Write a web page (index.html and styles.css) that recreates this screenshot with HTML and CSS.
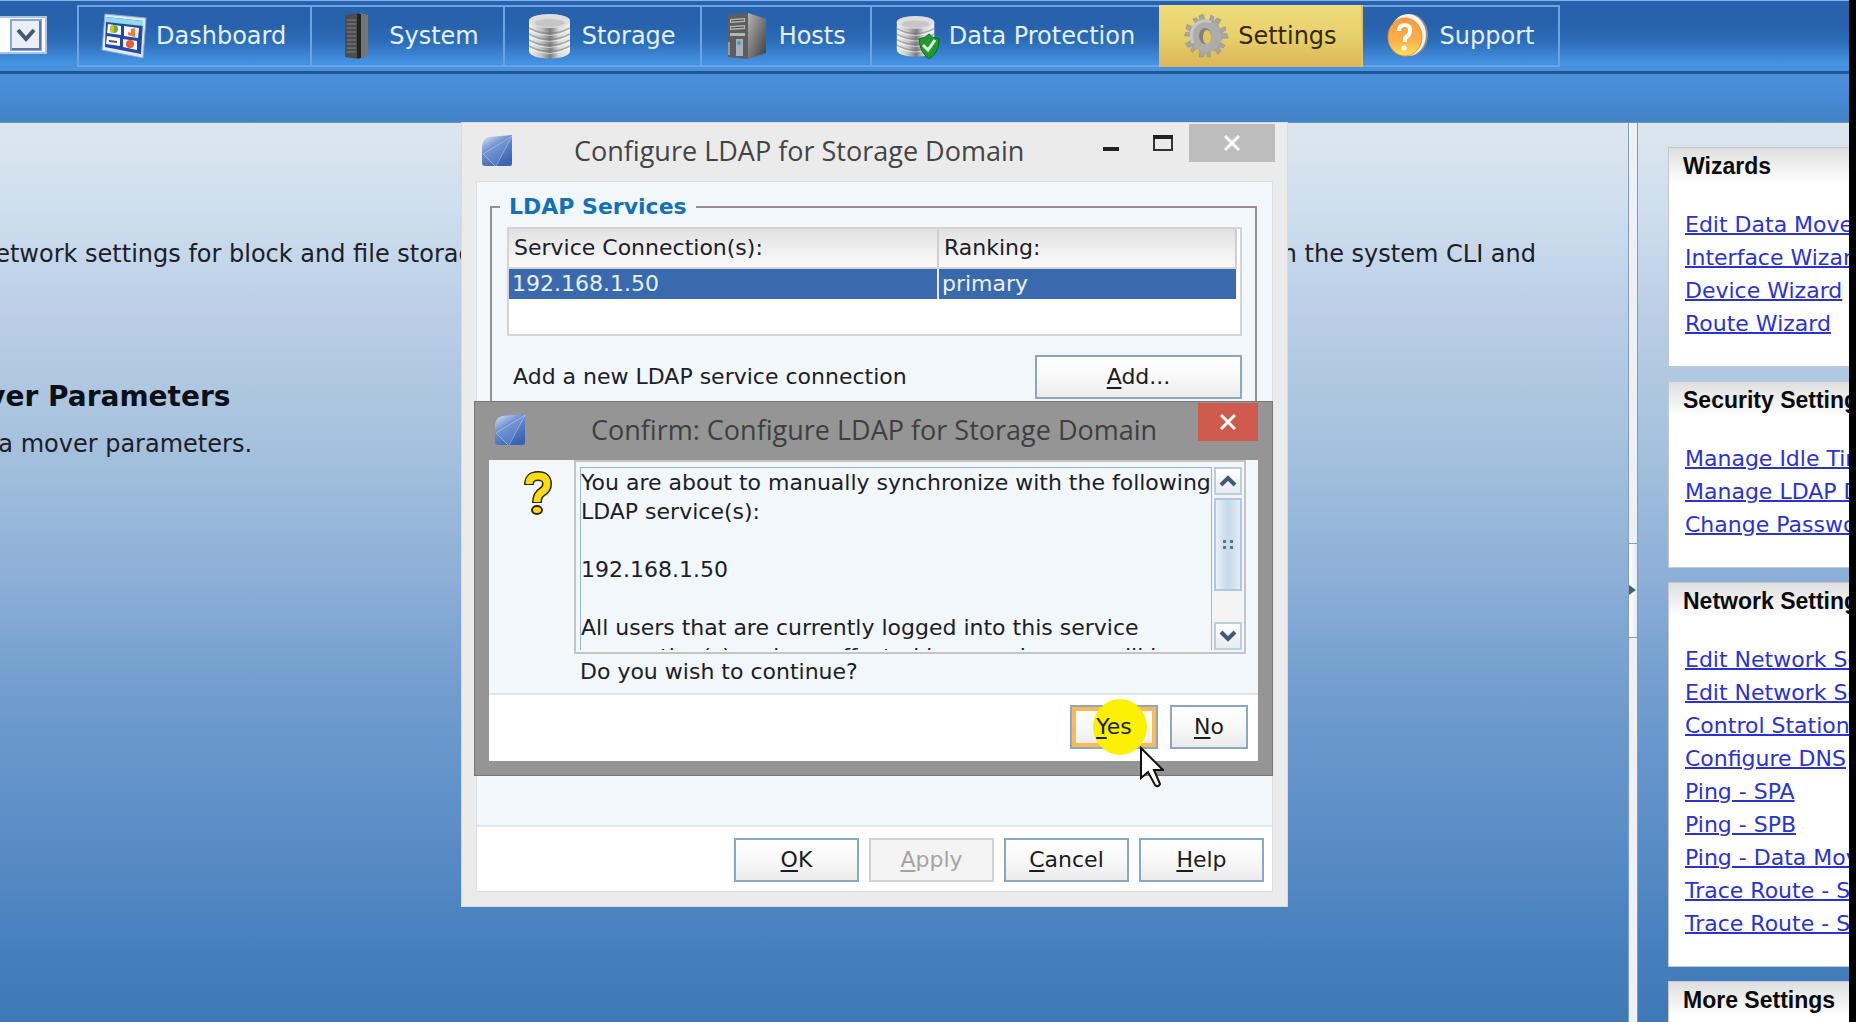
FILE: index.html
```html
<!DOCTYPE html>
<html lang="en">
<head>
    <meta charset="UTF-8">
    <meta name="viewport" content="width=device-width, initial-scale=1.0">
    <title>Settings</title>
    <link rel="stylesheet" href="styles.css">
</head>
<body>
    <!-- shared gradients and symbols -->
    <svg class="defs" width="0" height="0" aria-hidden="true">
        <defs>
            <linearGradient id="disk" x1="0" x2="1" y1="0" y2="0">
                <stop offset="0" stop-color="#f4f4f4"/>
                <stop offset="0.3" stop-color="#c4c4c4"/>
                <stop offset="0.52" stop-color="#7c7c7c"/>
                <stop offset="0.72" stop-color="#d8d8d8"/>
                <stop offset="1" stop-color="#f0f0f0"/>
            </linearGradient>
            <linearGradient id="steel" x1="0" x2="1" y1="0" y2="1">
                <stop offset="0" stop-color="#b4b4b4"/>
                <stop offset="1" stop-color="#3c3c3c"/>
            </linearGradient>
            <linearGradient id="orange" x1="0" x2="0" y1="0" y2="1">
                <stop offset="0" stop-color="#f79a3c"/>
                <stop offset="0.6" stop-color="#fbb04c"/>
                <stop offset="1" stop-color="#ffe25a"/>
            </linearGradient>
            <linearGradient id="blue" x1="0" x2="0.6" y1="0" y2="1">
                <stop offset="0" stop-color="#e4edf8"/>
                <stop offset="0.45" stop-color="#6b8fce"/>
                <stop offset="1" stop-color="#3a63b4"/>
            </linearGradient>
            <symbol id="drum" viewBox="0 0 46 46">
                <path d="M2 8C2 -1 43 -1 43 8V38C43 48 2 48 2 38Z" fill="url(#disk)"/>
                <ellipse cx="22.500" cy="8" rx="20.500" ry="7" fill="#dedede"/>
                <ellipse cx="22.500" cy="10" rx="15" ry="4" fill="#c6c6c6"/>
                <path d="M2 15Q22 26 43 15M2 21Q22 32 43 21M2 27Q22 38 43 27M2 33Q22 44 43 33" fill="none" stroke="#777" stroke-opacity="0.55" stroke-width="1.500"/>
                <path d="M2 17Q22 28 43 17M2 23Q22 34 43 23M2 29Q22 40 43 29M2 35Q22 46 43 35" fill="none" stroke="#fff" stroke-opacity="0.6"/>
            </symbol>
            <symbol id="app" viewBox="0 0 32 32">
                <path d="M8 2L31 0V29Q31 31 29 31H4Q1 31 1 28V10Q2 4 8 2Z" fill="url(#blue)"/>
                <path d="M1 18L31 1L14 31Z" fill="#8eabdb" fill-opacity="0.25"/>
                <path d="M2 19L14 31M31 1L15 31M31 1L2 19" fill="none" stroke="#b9cdec" stroke-opacity="0.6"/>
            </symbol>
            <symbol id="cross" viewBox="0 0 16 16">
                <path d="M1 1L15 15M15 1L1 15" stroke="#fff" stroke-width="3"/>
            </symbol>
        </defs>
    </svg>

    <header class="topbar">
        <div class="picker">
            <select class="picker-select" aria-label="System"><option></option></select>
            <svg class="picker-arrow" width="32" height="32" viewBox="0 0 32 32" aria-hidden="true">
                <rect x="1" y="1" width="30" height="30" fill="#e9eef7" stroke="#84a8d6" stroke-width="2"/>
                <path d="M30 2V30H2" fill="none" stroke="#5579ab" stroke-width="2"/>
                <path d="M8 11L16 20L24 11" fill="none" stroke="#41587a" stroke-width="4"/>
            </svg>
        </div>
        <nav class="nav">
            <a class="nav-item" href="#dashboard">
                <svg width="46" height="46" viewBox="0 0 46 46" aria-hidden="true">
                    <path d="M4 1L45 5L42 45L1 37Z" fill="#dce9f4" stroke="#91a9c4"/>
                    <path d="M5 4L42 8L40 41L4 34Z" fill="#2448a8"/>
                    <path d="M5 4L42 8V13L5 9Z" fill="#8fdcea"/>
                    <path d="M7 11L20 13V22L6 20ZM23 13L38 15L37 25L23 23ZM6 23L19 25V33L5 31ZM22 26L36 28V37L22 34Z" fill="#f6f8fa"/>
                    <circle cx="13" cy="16" r="4" fill="#6cae3e"/>
                    <path d="M13 12A4 4 0 0 0 13 20Z" fill="#e2b52e"/>
                    <path d="M27 22V19L30 20V16L34 15V24Z" fill="#ef7a32"/>
                    <path d="M8 27L16 28V30L8 29Z" fill="#555"/>
                    <circle cx="29" cy="31" r="4" fill="#ea5a36"/>
                </svg>
                Dashboard
            </a>
            <a class="nav-item" href="#system">
                <svg width="46" height="46" viewBox="0 0 46 46" aria-hidden="true">
                    <path d="M11 2L26 0V46L11 44Z" fill="#4c4c4c"/>
                    <path d="M26 0L34 2V43L26 46Z" fill="#747474"/>
                    <path d="M23 1H27V45H23Z" fill="#222"/>
                    <path d="M13 7H22M13 11H22M13 15H22M13 19H22M13 23H22M13 27H22M13 31H22M13 35H22M13 39H22" stroke="#858585"/>
                </svg>
                System
            </a>
            <a class="nav-item" href="#storage">
                <svg width="46" height="46" aria-hidden="true"><use href="#drum"/></svg>
                Storage
            </a>
            <a class="nav-item" href="#hosts">
                <svg width="46" height="46" viewBox="0 0 46 46" aria-hidden="true">
                    <path d="M4 2L24 0V46L4 44Z" fill="#5e5e5e"/>
                    <path d="M24 0L42 6V40L24 46Z" fill="url(#steel)"/>
                    <path d="M6 6L21 5V9L6 10ZM6 13L21 12V16L6 17ZM6 20L21 20V23L6 23Z" fill="#b5b5b5"/>
                    <path d="M7 8L20 7M7 15L20 14" stroke="#444"/>
                    <rect x="12" y="26" width="7" height="17" fill="#a9b1b7"/>
                    <circle cx="15" cy="30" r="2" fill="#28a0e0"/>
                    <path d="M5 29V42" stroke="#9a9a9a" stroke-width="2"/>
                </svg>
                Hosts
            </a>
            <a class="nav-item" href="#protection">
                <svg width="46" height="46" viewBox="0 0 46 46" aria-hidden="true">
                    <use href="#drum" x="1" y="2" width="42" height="42"/>
                    <path d="M25 26Q32 25 35 21Q38 25 45 26Q45 40 35 46Q26 40 25 26Z" fill="#1f9a2c" stroke="#0d6d1c"/>
                    <path d="M29 32L34 37L41 27" fill="none" stroke="#e9f7e4" stroke-width="3"/>
                </svg>
                Data Protection
            </a>
            <a class="nav-item nav-item-active" href="#settings">
                <svg width="46" height="46" viewBox="0 0 46 46" aria-hidden="true">
                    <g fill="#a6a6a2" stroke="#8e8e88" stroke-width="0.500">
                        <path id="tooth" d="M17 13L16 3L20 1L22 7L26 8L28 2L31 4L29 13Z"/>
                        <use href="#tooth" transform="rotate(51 23 23)"/>
                        <use href="#tooth" transform="rotate(103 23 23)"/>
                        <use href="#tooth" transform="rotate(154 23 23)"/>
                        <use href="#tooth" transform="rotate(206 23 23)"/>
                        <use href="#tooth" transform="rotate(257 23 23)"/>
                        <use href="#tooth" transform="rotate(309 23 23)"/>
                    </g>
                    <ellipse cx="23" cy="23" rx="10" ry="11" fill="none" stroke="#acacaa" stroke-width="10"/>
                    <path d="M10 30A14 15 0 0 1 28 9" fill="none" stroke="#c6c6c4" stroke-width="3"/>
                    <ellipse cx="22" cy="23" rx="6" ry="8" fill="#80807c"/>
                    <ellipse cx="24" cy="24" rx="4" ry="7" fill="#e2c763"/>
                </svg>
                Settings
            </a>
            <a class="nav-item" href="#support">
                <svg width="46" height="46" viewBox="0 0 46 46" aria-hidden="true">
                    <ellipse cx="25" cy="22" rx="18" ry="21" fill="#8f8f93"/>
                    <ellipse cx="23" cy="22" rx="18" ry="21" fill="#f5f3f0"/>
                    <ellipse cx="20" cy="24" rx="17" ry="19" fill="url(#orange)" stroke="#e8912c"/>
                    <path d="M14 18Q14 12 20 12Q26 12 25 19Q24 23 20 25V29" fill="none" stroke="#fff" stroke-width="4"/>
                    <circle cx="19" cy="35" r="2.500" fill="#fff"/>
                </svg>
                Support
            </a>
        </nav>
    </header>
    <div class="subbar"></div>

    <div class="workspace">
        <main class="content">
            <p class="intro"><span>Configure network settings for block and file storage</span><span>from the system CLI and</span></p>
            <h2 class="content-title">Data Mover Parameters</h2>
            <p class="content-text">Manage data mover parameters.</p>
        </main>
        <div class="splitter">
            <button class="splitter-handle" type="button" aria-label="Collapse panel">
                <svg width="7" height="10" viewBox="0 0 7 10" aria-hidden="true"><path d="M0 0L7 5L0 10Z" fill="#46607f"/></svg>
            </button>
        </div>
        <aside class="sidebar">
            <section class="panel">
                <h3 class="panel-title">Wizards</h3>
                <ul class="panel-links">
                    <li><a href="#">Edit Data Mover</a></li>
                    <li><a href="#">Interface Wizard</a></li>
                    <li><a href="#">Device Wizard</a></li>
                    <li><a href="#">Route Wizard</a></li>
                </ul>
            </section>
            <section class="panel">
                <h3 class="panel-title">Security Settings</h3>
                <ul class="panel-links">
                    <li><a href="#">Manage Idle Timeout</a></li>
                    <li><a href="#">Manage LDAP Domain</a></li>
                    <li><a href="#">Change Password</a></li>
                </ul>
            </section>
            <section class="panel">
                <h3 class="panel-title">Network Settings</h3>
                <ul class="panel-links">
                    <li><a href="#">Edit Network Settings</a></li>
                    <li><a href="#">Edit Network Settings</a></li>
                    <li><a href="#">Control Station</a></li>
                    <li><a href="#">Configure DNS</a></li>
                    <li><a href="#">Ping - SPA</a></li>
                    <li><a href="#">Ping - SPB</a></li>
                    <li><a href="#">Ping - Data Mover</a></li>
                    <li><a href="#">Trace Route - SPA</a></li>
                    <li><a href="#">Trace Route - SPB</a></li>
                </ul>
            </section>
            <section class="panel">
                <h3 class="panel-title">More Settings</h3>
                <ul class="panel-links"></ul>
            </section>
        </aside>
    </div>

    <!-- LDAP configuration window -->
    <div class="window ldap-window" role="dialog" aria-labelledby="ldapTitle">
        <div class="titlebar">
            <svg class="app-icon" width="32" height="32" aria-hidden="true"><use href="#app"/></svg>
            <h1 class="window-title" id="ldapTitle">Configure LDAP for Storage Domain</h1>
            <button class="win-button" type="button" aria-label="Minimize">
                <svg width="16" height="16" viewBox="0 0 16 16" aria-hidden="true"><path d="M0 12H16V16H0Z" fill="#222"/></svg>
            </button>
            <button class="win-button" type="button" aria-label="Maximize">
                <svg width="20" height="16" viewBox="0 0 20 16" aria-hidden="true"><path d="M1 2H19V15H1Z" fill="none" stroke="#333" stroke-width="2"/><path d="M0 0H20V4H0Z" fill="#222"/></svg>
            </button>
            <button class="win-button win-close" type="button" aria-label="Close">
                <svg width="16" height="16" aria-hidden="true"><use href="#cross"/></svg>
            </button>
        </div>
        <div class="window-body">
            <div class="window-main">
                <fieldset class="services">
                    <legend>LDAP Services</legend>
                    <div class="grid">
                        <table class="grid-table">
                            <thead>
                                <tr>
                                    <th class="col-service">Service Connection(s):</th>
                                    <th>Ranking:</th>
                                </tr>
                            </thead>
                            <tbody>
                                <tr>
                                    <td>192.168.1.50</td>
                                    <td>primary</td>
                                </tr>
                            </tbody>
                        </table>
                    </div>
                    <div class="add-row">
                        <label for="addBtn">Add a new LDAP service connection</label>
                        <button class="button add-button" id="addBtn" type="button"><u>A</u>dd...</button>
                    </div>
                </fieldset>
            </div>
            <div class="window-buttons">
                <button class="button" type="button"><u>O</u>K</button>
                <button class="button" type="button" disabled><u>A</u>pply</button>
                <button class="button" type="button"><u>C</u>ancel</button>
                <button class="button" type="button"><u>H</u>elp</button>
            </div>
        </div>
    </div>

    <!-- confirmation window -->
    <div class="window confirm-window" role="alertdialog" aria-labelledby="confirmTitle">
        <div class="titlebar">
            <svg class="app-icon" width="32" height="32" aria-hidden="true"><use href="#app"/></svg>
            <h1 class="window-title" id="confirmTitle">Confirm: Configure LDAP for Storage Domain</h1>
            <button class="win-button win-close" type="button" aria-label="Close">
                <svg width="16" height="16" aria-hidden="true"><use href="#cross"/></svg>
            </button>
        </div>
        <div class="window-body">
            <div class="confirm-main">
                <svg class="question" width="28" height="44" viewBox="0 0 28 44" aria-hidden="true">
                    <path d="M5 14Q5 5 14 5Q23 5 23 13Q23 18 18 21Q13 24 13 32" fill="none" stroke="#2c2508" stroke-width="10"/>
                    <path d="M5 13Q5 5 14 5Q23 5 23 13Q23 18 18 21Q13 24 13 31" fill="none" stroke="#fbdc10" stroke-width="7"/>
                    <ellipse cx="13" cy="39" rx="5" ry="4" fill="#fbdc10" stroke="#2c2508" stroke-width="2"/>
                </svg>
                <div class="message">
                    <div class="scrollbox">
                        <div class="scrolltext">You are about to manually synchronize with the following
LDAP service(s):

192.168.1.50

All users that are currently logged into this service
connection(s) and are affected by any changes will be</div>
                        <div class="scrollbar">
                            <button class="scroll-button" type="button" aria-label="Scroll up">
                                <svg width="18" height="12" viewBox="0 0 18 12" aria-hidden="true"><path d="M2 10L9 3L16 10" fill="none" stroke="#43597a" stroke-width="4"/></svg>
                            </button>
                            <div class="scroll-thumb">
                                <svg width="10" height="10" viewBox="0 0 10 10" aria-hidden="true"><path d="M0 0H3V3H0ZM7 0H10V3H7ZM0 6H3V9H0ZM7 6H10V9H7Z" fill="#56708f"/></svg>
                            </div>
                            <button class="scroll-button" type="button" aria-label="Scroll down">
                                <svg width="18" height="12" viewBox="0 0 18 12" aria-hidden="true"><path d="M2 2L9 9L16 2" fill="none" stroke="#43597a" stroke-width="4"/></svg>
                            </button>
                        </div>
                    </div>
                    <p class="ask">Do you wish to continue?</p>
                </div>
            </div>
            <div class="window-buttons">
                <button class="button yes-button" type="button"><span class="halo"></span><span class="yes-label"><u>Y</u>es</span></button>
                <button class="button no-button" type="button"><u>N</u>o</button>
            </div>
        </div>
    </div>

    <svg class="cursor" width="24" height="42" viewBox="0 0 24 42" aria-hidden="true">
        <path d="M1 2V32L8 26L15 39Q18 42 20 38L14 24H23Z" fill="#fff" stroke="#111" stroke-width="2"/>
    </svg>
</body>
</html>
```

FILE: styles.css
```css
* {
    box-sizing: border-box;
}
body {
    display: flex;
    flex-direction: column;
    height: 100vh;
    margin: 0;
    padding-right: 7px;
    overflow: hidden;
    background-color: #000;
    color: #1c2026;
    font-family: "DejaVu Sans", Verdana, sans-serif;
    font-size: 22px;
    line-height: 28px;
}
h1, h2, h3, p, ul {
    margin: 0;
    padding: 0;
}
button {
    margin: 0;
    padding: 0;
    font: inherit;
    color: inherit;
}
svg {
    display: block;
    flex: none;
}
.defs {
    position: absolute;
}

/* top navigation */
.topbar {
    display: flex;
    flex: none;
    align-items: flex-start;
    gap: 30px;
    height: 74px;
    padding-top: 4px;
    border-top: 1px solid #85b2ea;
    border-bottom: 3px solid #1d5793;
    background: linear-gradient(#2862ad, #2862ad 35%, #2c6db8 58%, #4492e2 88%, #4a92dc);
}
.picker {
    position: relative;
    width: 47px;
    height: 38px;
    margin-top: 11px;
}
.picker-select {
    width: 100%;
    height: 100%;
    border: 2px solid #a9c4e6;
    border-left: none;
    border-radius: 0;
    background: #fff;
    appearance: none;
}
.picker-arrow {
    position: absolute;
    top: 3px;
    right: 5px;
    pointer-events: none;
}
.nav {
    display: flex;
    height: 62px;
    border: 2px solid #6ba3e4;
}
.nav-item {
    display: flex;
    align-items: center;
    gap: 9px;
    padding: 0 24px 0 22px;
    border-right: 2px solid #6ba3e4;
    color: #e4f1fd;
    font-size: 24px;
    text-decoration: none;
    white-space: nowrap;
}
.nav-item:last-child {
    border-right: none;
}
.nav-item-active {
    margin: -2px 0 -2px -2px;
    padding-left: 24px;
    border-right-color: #e0c265;
    background: linear-gradient(#efdc7a, #e8d06c 50%, #dbb656);
    color: #33290a;
}
.subbar {
    flex: none;
    height: 49px;
    background: linear-gradient(#4d90da, #4589d2 60%, #4483c5);
    border-bottom: 1px solid #6c93ba;
}

/* page */
.workspace {
    display: flex;
    flex: 1;
    min-height: 0;
    overflow: hidden;
    background: linear-gradient(#dde6ee, #cfdfee 9%, #b9cde6 22%, #a8c3de 34%, #8db0d8 50%, #729dce 63%, #588bc6 81%, #4580bd 92%, #3f78b4);
}
/* scrolled sideways, the start of each line is out of view */
.content {
    flex: 1;
    min-width: 0;
    margin-left: -144px;
    padding: 115px 92px 0 0;
    font-size: 24px;
    line-height: 32px;
}
.intro {
    display: flex;
    justify-content: space-between;
    white-space: nowrap;
}
.content-title {
    margin-top: 111px;
    font-size: 28px;
    line-height: 32px;
    color: #0c1118;
}
.content-text {
    margin-top: 15px;
}
.splitter {
    display: flex;
    flex: none;
    align-items: center;
    width: 10px;
    border: 1px solid #829cbd;
    border-width: 0 1px;
    background-color: #eef0f3;
    padding-bottom: 70px;
}
.splitter-handle {
    display: flex;
    align-items: center;
    width: 8px;
    height: 95px;
    border: solid #829cbd;
    border-width: 1px 0;
    background: linear-gradient(to right, #fff, #e6ebf1);
    margin-top: 105px;
}
.sidebar {
    display: flex;
    flex: none;
    flex-direction: column;
    gap: 14px;
    width: 211px;
    padding: 24px 0 0 30px;
}
.panel {
    flex: none;
    width: 320px;
    border: 1px solid #c3c8d0;
    background-color: #fff;
}
.panel-title {
    padding: 2px 14px 0;
    background: linear-gradient(#dfdfdf, #fff);
    color: #0a0a0a;
    font-family: "Liberation Sans", Arial, sans-serif;
    font-size: 23px;
    line-height: 33px;
}
.panel-links {
    padding: 25px 16px 26px;
    list-style: none;
    line-height: 33px;
    white-space: nowrap;
}
.panel-links a {
    color: #2b32d2;
    text-decoration-thickness: 2px;
}

/* windows */
.window {
    position: absolute;
    display: flex;
    flex-direction: column;
    padding: 0 14px 14px;
}
.ldap-window {
    top: 122px;
    left: 461px;
    width: 827px;
    height: 785px;
    border: 1px solid #d9dcdf;
    background-color: #ebebeb;
}
.confirm-window {
    top: 401px;
    left: 474px;
    width: 799px;
    height: 375px;
    border: 1px solid #777;
    background-color: #959595;
}
.titlebar {
    display: flex;
    flex: none;
    align-items: flex-start;
    height: 58px;
    padding-left: 5px;
}
.app-icon {
    margin-top: 12px;
}
.window-title {
    flex: 1;
    padding-left: 61px;
    color: #444;
    font-family: "Open Sans", "Segoe UI", sans-serif;
    font-size: 27px;
    font-weight: 400;
    line-height: 56px;
    white-space: nowrap;
}
.win-button {
    display: flex;
    align-items: center;
    justify-content: center;
    width: 52px;
    height: 38px;
    margin-top: 1px;
    border: none;
    background: none;
}
.win-close {
    width: 86px;
    margin-right: -2px;
    background-color: #bdbdbd;
}
.window-body {
    display: flex;
    flex: 1;
    flex-direction: column;
    min-height: 0;
    background-color: #fff;
}
.ldap-window .window-body {
    border: 1px solid #dcdfe2;
}
.window-main {
    flex: 1;
    padding: 11px 15px 64px 13px;
    border-bottom: 2px solid #dfe8f1;
    background-color: #f2f7fc;
}
.window-buttons {
    display: flex;
    flex: none;
    justify-content: flex-end;
    gap: 10px;
    height: 64px;
    padding: 11px 8px 0;
}
.button {
    width: 125px;
    height: 44px;
    border: 2px solid #8ba8c2;
    background: linear-gradient(#fff, #f8f8f8 50%, #ebebeb);
    color: #1c1c1c;
}
.button:disabled {
    border-color: #d0d3d6;
    color: #a4a4a4;
    background: #f4f4f4;
}
.button u {
    text-decoration-thickness: 2px;
    text-underline-offset: 3px;
}

/* LDAP services */
.services {
    height: 100%;
    margin: 0;
    padding: 6px 13px 0 15px;
    border: 2px solid #929292;
}
.services legend {
    padding: 0 9px;
    margin-left: -7px;
    color: #1470b8;
    font-weight: 700;
}
.grid {
    height: 109px;
    padding-right: 3px;
    border: 2px solid #d2d4d6;
    background-color: #fff;
}
.grid-table {
    width: 100%;
    border-collapse: collapse;
    line-height: 28px;
    text-align: left;
}
.grid-table th {
    height: 39px;
    padding: 0 5px;
    border-right: 2px solid #cfcfcf;
    border-bottom: 2px solid #d5d5d5;
    background: linear-gradient(#e2e2e2, #fafafa);
    font-weight: 400;
}
.grid-table td {
    padding: 1px 3px;
    background-color: #3a6aad;
    color: #eaf2fc;
}
.grid-table td + td {
    border-left: 2px solid #e8eef6;
}
.col-service {
    width: 429px;
}
.add-row {
    display: flex;
    align-items: center;
    justify-content: space-between;
    margin-top: 19px;
    padding-left: 6px;
}
.add-button {
    width: 207px;
}

/* confirmation */
.confirm-window .window-title {
    padding-left: 65px;
    color: #3f3f3f;
}
.confirm-window .win-close {
    width: 60px;
    margin-right: 0;
    background-color: #cd5a4c;
}
.confirm-main {
    display: flex;
    flex: 1;
    padding-right: 12px;
    border-bottom: 2px solid #dbe7f1;
    background-color: #f2f7fc;
}
.question {
    margin: 11px 22px 0 35px;
}
.message {
    flex: 1;
    min-width: 0;
}
.scrollbox {
    display: flex;
    gap: 2px;
    height: 194px;
    padding: 5px 2px 2px 4px;
    border: 2px solid #c2c4c6;
}
.scrolltext {
    flex: 1;
    min-width: 0;
    overflow-x: visible;
    overflow-y: clip;
    border: 1px solid #9db5d3;
    border-bottom: none;
    line-height: 29px;
    white-space: pre;
}
.scrollbar {
    display: flex;
    flex-direction: column;
    width: 28px;
    background-color: #f3f3f3;
}
.scroll-button {
    display: flex;
    flex: none;
    align-items: center;
    justify-content: center;
    height: 28px;
    border: 2px solid #bccddd;
    background: linear-gradient(#fff, #e6ecf2);
}
.scroll-thumb {
    display: flex;
    align-items: center;
    justify-content: center;
    height: 93px;
    margin: 3px 0 auto;
    border: 2px solid #b3c8dc;
    background: linear-gradient(to right, #e9f1f8, #c7d8e9 50%, #e2ecf5);
}
.ask {
    padding: 4px 6px;
}
.confirm-window .window-buttons {
    gap: 12px;
    height: 66px;
    padding: 10px 10px 0;
}
.yes-button {
    position: relative;
    width: 88px;
    box-shadow: inset 0 0 0 4px #fbb958;
}
.no-button {
    width: 78px;
}
/* click highlight over the button */
.halo {
    position: absolute;
    top: -8px;
    left: 21px;
    width: 54px;
    height: 56px;
    border-radius: 50%;
    background-color: #fbf000;
}
.yes-label {
    position: relative;
}
.cursor {
    position: absolute;
    top: 746px;
    left: 1140px;
}
```
